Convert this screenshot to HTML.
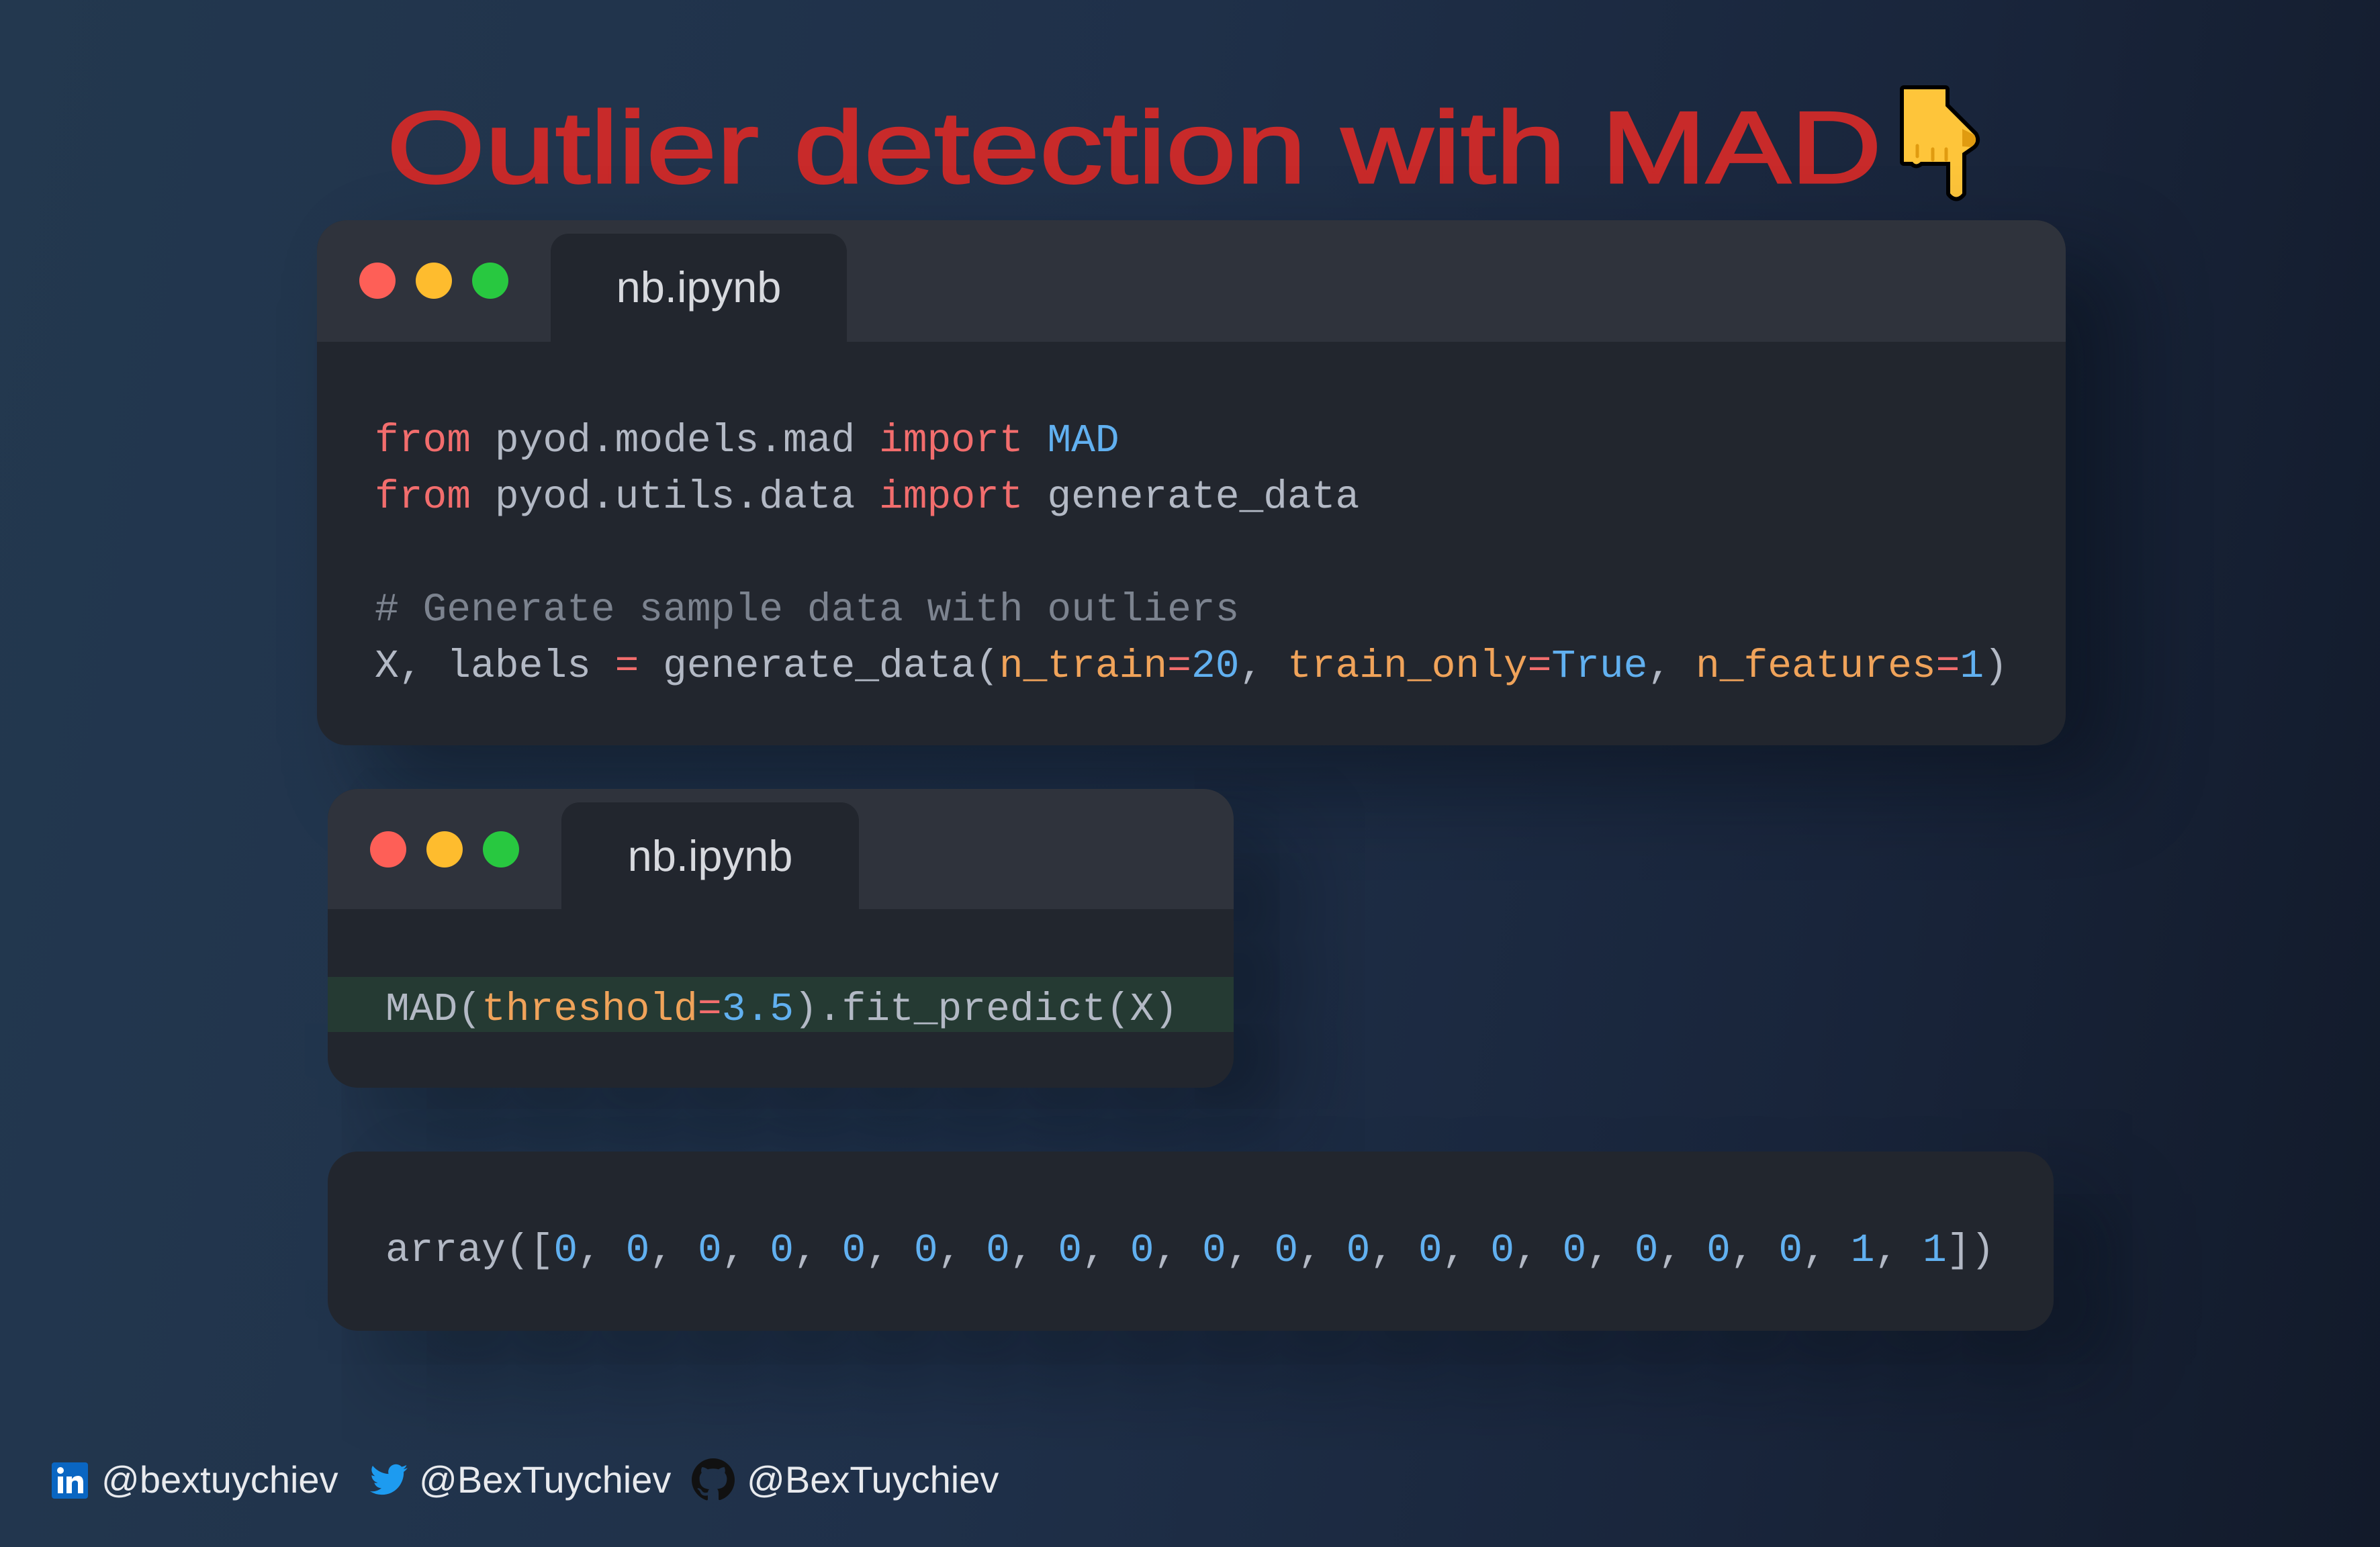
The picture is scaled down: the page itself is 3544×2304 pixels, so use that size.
<!DOCTYPE html>
<html><head><meta charset="utf-8"><style>
*{margin:0;padding:0;box-sizing:border-box}
body{width:3544px;height:2304px;overflow:hidden;position:relative;
background:linear-gradient(100deg,#23384f 0%,#1f3049 45%,#19253b 75%,#121a2a 100%);
font-family:"Liberation Sans",sans-serif}
.card{position:absolute;background:#22262e;border-radius:45px;overflow:hidden;
box-shadow:80px 60px 160px rgba(5,10,20,0.45)}
.hdr{position:absolute;left:0;top:0;right:0;background:#2f333c}
.tab{position:absolute;background:#22262e;border-radius:27px 27px 0 0;color:#d8dadf;font-size:65px;text-align:center}
.dot{position:absolute;width:54px;height:54px;border-radius:50%}
.code{position:absolute;font-family:"Liberation Mono",monospace;font-size:59.6px;color:#b3b9c5;white-space:pre;line-height:84px}
.k{color:#f26d6d}.b{color:#61b0f0}.o{color:#f0a35a}.c{color:#7c838f}.r{color:#f26d6d}
.foot{position:absolute;top:2170px;font-size:56px;color:#e8eaee;line-height:68px}
</style></head><body>

<svg style="position:absolute;left:0;top:0" width="3544" height="400">
<text x="576" y="272" font-family="Liberation Sans, sans-serif" font-size="152" fill="#c82a2a" stroke="#c82a2a" stroke-width="3" textLength="2226" lengthAdjust="spacingAndGlyphs">Outlier detection with MAD</text>
<g transform="translate(2780,100)">
<path d="M55,33 H117 V58 L160,101 Q166,112 155,119 L142,128 V188 Q133,199 124,188 V141 H80 Q73,148 68,141 H55 Z" fill="#fec53a" stroke="#000" stroke-width="12" stroke-linejoin="round" paint-order="stroke"/>
<path d="M142,92 L160,101 Q166,112 155,119 L142,118 Z" fill="#e09b10"/>
<path d="M75,117 V133 M98,122 V138 M118,122 V138" stroke="#e09b10" stroke-width="5" stroke-linecap="round"/>
</g>
</svg>

<div class="card" style="left:472px;top:328px;width:2604px;height:782px">
 <div class="hdr" style="height:181px"></div>
 <div class="dot" style="left:63px;top:63px;background:#fe5f57"></div>
 <div class="dot" style="left:147px;top:63px;background:#febc2e"></div>
 <div class="dot" style="left:231px;top:63px;background:#28c840"></div>
 <div class="tab" style="left:348px;top:20px;width:441px;height:161px;line-height:160px">nb.ipynb</div>
 <div class="code" style="left:86px;top:286px"><span class="k">from</span> pyod.models.mad <span class="k">import</span> <span class="b">MAD</span>
<span class="k">from</span> pyod.utils.data <span class="k">import</span> generate_data

<span class="c"># Generate sample data with outliers</span>
X, labels <span class="r">=</span> generate_data(<span class="o">n_train</span><span class="r">=</span><span class="b">20</span>, <span class="o">train_only</span><span class="r">=</span><span class="b">True</span>, <span class="o">n_features</span><span class="r">=</span><span class="b">1</span>)</div>
</div>

<div class="card" style="left:488px;top:1175px;width:1349px;height:445px">
 <div class="hdr" style="height:179px"></div>
 <div class="dot" style="left:63px;top:63px;background:#fe5f57"></div>
 <div class="dot" style="left:147px;top:63px;background:#febc2e"></div>
 <div class="dot" style="left:231px;top:63px;background:#28c840"></div>
 <div class="tab" style="left:348px;top:20px;width:443px;height:159px;line-height:160px">nb.ipynb</div>
 <div style="position:absolute;left:0;right:0;top:280px;height:82px;background:#253a33"></div>
 <div class="code" style="left:86px;top:286px">MAD(<span class="o">threshold</span><span class="r">=</span><span class="b">3.5</span>).fit_predict(X)</div>
</div>

<div class="card" style="left:488px;top:1715px;width:2570px;height:267px">
 <div class="code" style="left:86px;top:105px">array([<span class="b">0</span>, <span class="b">0</span>, <span class="b">0</span>, <span class="b">0</span>, <span class="b">0</span>, <span class="b">0</span>, <span class="b">0</span>, <span class="b">0</span>, <span class="b">0</span>, <span class="b">0</span>, <span class="b">0</span>, <span class="b">0</span>, <span class="b">0</span>, <span class="b">0</span>, <span class="b">0</span>, <span class="b">0</span>, <span class="b">0</span>, <span class="b">0</span>, <span class="b">1</span>, <span class="b">1</span>])</div>
</div>

<svg style="position:absolute;left:77px;top:2178px" width="54" height="54" viewBox="0 0 54 54">
<rect width="54" height="54" rx="4" fill="#0a66c2"/>
<rect x="9" y="21" width="8" height="25" fill="#fff"/><circle cx="13" cy="12" r="5" fill="#fff"/>
<path d="M22,21 H30 V25 Q33,20 39,20 Q47,20 47,30 V46 H39 V31 Q39,27 35,27 Q30,27 30,32 V46 H22 Z" fill="#fff"/>
</svg>
<div class="foot" style="left:151px">@bextuychiev</div>
<svg style="position:absolute;left:551px;top:2180px" width="56" height="48" viewBox="0 0 24 20">
<path d="M24,2.4 a10,10 0 0 1 -2.8,.8 a5,5 0 0 0 2.1,-2.7 a10,10 0 0 1 -3.1,1.2 a4.9,4.9 0 0 0 -8.4,4.5 A14,14 0 0 1 1.7,1 a4.9,4.9 0 0 0 1.5,6.6 a4.9,4.9 0 0 1 -2.2,-.6 a4.9,4.9 0 0 0 3.9,4.8 a4.9,4.9 0 0 1 -2.2,.1 a4.9,4.9 0 0 0 4.6,3.4 A9.9,9.9 0 0 1 0,17.3 A14,14 0 0 0 7.5,19.5 c9.1,0 14,-7.5 14,-14 v-.6 A10,10 0 0 0 24,2.4z" fill="#1d9bf0"/>
</svg>
<div class="foot" style="left:624px">@BexTuychiev</div>
<svg style="position:absolute;left:1030px;top:2172px" width="64" height="64" viewBox="0 0 16 16">
<path d="M8,0C3.6,0 0,3.6 0,8c0,3.5 2.3,6.5 5.5,7.6.4.1.5-.2.5-.4v-1.4c-2.2.5-2.7-1-2.7-1-.4-.9-.9-1.2-.9-1.2-.7-.5.1-.5.1-.5.8.1 1.2.8 1.2.8.7 1.2 1.9.9 2.3.7.1-.5.3-.9.5-1.100-1.8-.2-3.6-.9-3.6-4 0-.9.3-1.6.8-2.1-.1-.2-.4-1 .1-2.1 0 0 .7-.2 2.2.8.6-.2 1.3-.3 2-.3s1.4.1 2 .3c1.5-1 2.2-.8 2.2-.8.4 1.1.2 1.9.1 2.1.5.6.8 1.3.8 2.1 0 3.1-1.9 3.700-3.6 3.9.3.3.5.8.5 1.5v2.2c0 .2.1.5.6.4C13.7,14.5 16,11.5 16,8 16,3.6 12.4,0 8,0z" fill="#111"/>
</svg>
<div class="foot" style="left:1112px">@BexTuychiev</div>
</body></html>
